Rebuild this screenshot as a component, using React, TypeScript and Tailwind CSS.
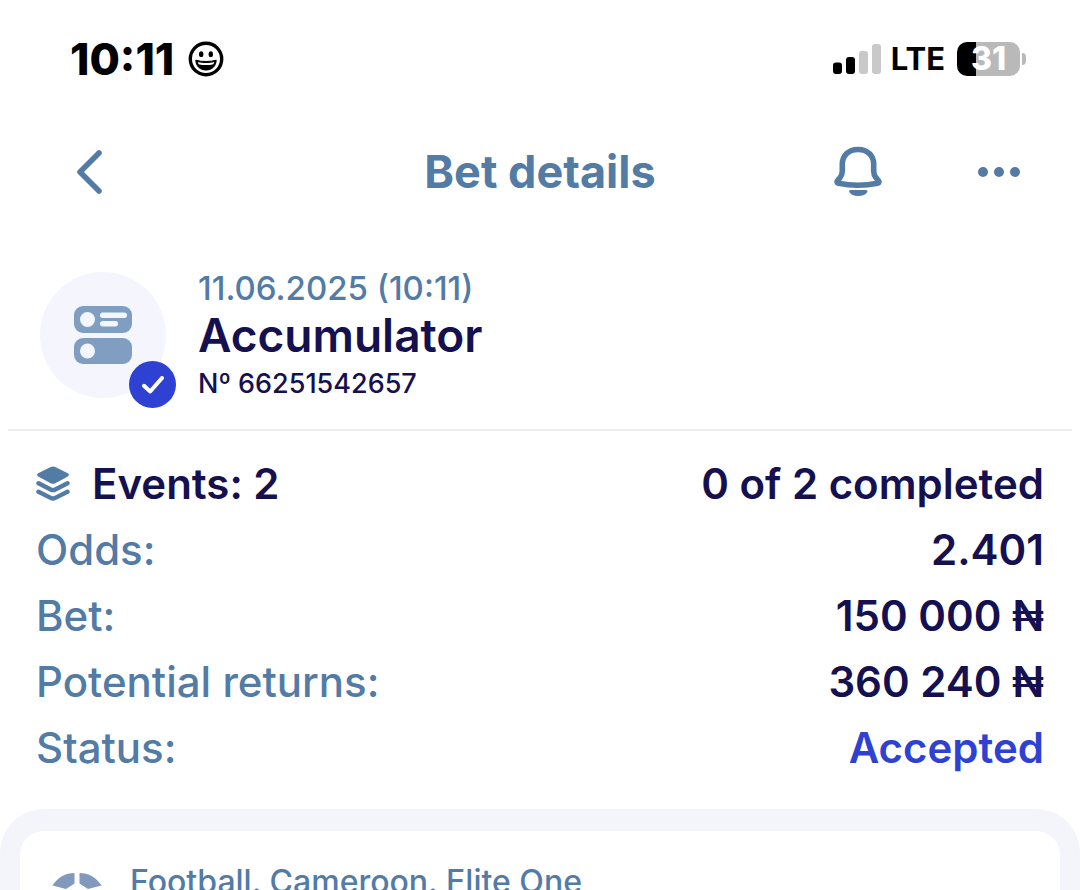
import React from 'react';

type Detail = {
    label: string;
    value: string;
    accent?: boolean;
};

const details: Detail[] = [
    { label: 'Odds:', value: '2.401' },
    { label: 'Bet:', value: '150 000 ₦' },
    { label: 'Potential returns:', value: '360 240 ₦' },
    { label: 'Status:', value: 'Accepted', accent: true },
];

const StatusBar: React.FC = () => (
    <div className="flex items-center justify-between pt-8 pl-[70px] pr-[54px] text-black">
        <div className="flex items-center gap-3.5">
            <span className="text-[44px] leading-[54px] font-extrabold">10:11</span>
            <svg className="size-9" viewBox="0 0 36 36" fill="none" aria-hidden="true">
                <circle cx="18" cy="18" r="15.7" stroke="currentColor" strokeWidth="3.4" />
                <ellipse cx="13.2" cy="13.2" rx="2.2" ry="2.9" fill="currentColor" />
                <ellipse cx="22.8" cy="13.2" rx="2.2" ry="2.9" fill="currentColor" />
                <path
                    d="M7.8 19.2c3 .9 6.400 1.300 10.200 1.300s7.200-.4 10.200-1.300c-.2 6-4.300 9.800-10.200 9.800S8 25.200 7.800 19.200Z"
                    fill="currentColor"
                    stroke="currentColor"
                    strokeLinejoin="round"
                />
                <path d="M9.800 20.900c2.400.7 5.100 1 8.200 1s5.800-.3 8.200-1c-.2.900-.5 1.600-.9 2.300-2.200.6-4.600.9-7.300.9s-5.100-.3-7.300-.9c-.4-.7-.7-1.400-.9-2.300Z" fill="#fff" />
            </svg>
        </div>
        <div className="flex items-center">
            <svg className="h-8 w-12" viewBox="0 0 48 32" aria-hidden="true">
                <rect x="0" y="19.500" width="9" height="11.500" rx="3" fill="#000" />
                <rect x="13" y="14" width="9" height="17" rx="3" fill="#000" />
                <rect x="26" y="8" width="9" height="23" rx="3" fill="#c9c9c9" />
                <rect x="39" y="1" width="9" height="30" rx="3" fill="#c9c9c9" />
            </svg>
            <span className="ml-2.5 text-[31px] leading-[54px] font-bold">LTE</span>
            <div className="ml-3 flex items-center gap-0.5">
                <div className="flex h-[34px] w-[63px] items-center justify-center rounded-[10px] bg-linear-to-r from-black from-30% to-[#b9b9b9] to-30%">
                    <span className="text-[32px] leading-8 font-extrabold text-white">31</span>
                </div>
                <div className="h-3 w-1 rounded-r-full bg-[#b9b9b9]" />
            </div>
        </div>
    </div>
);

const Header: React.FC = () => (
    <header className="grid grid-cols-[1fr_auto_1fr] items-center px-[60px] pt-[50px] text-[#527ba6]">
        <button aria-label="Back" className="flex size-[72px] items-center">
            <svg className="h-11 w-[60px]" viewBox="0 0 60 44" fill="none" aria-hidden="true">
                <path d="M39 3 20 22l19 19" stroke="currentColor" strokeWidth="5.500" strokeLinecap="round" strokeLinejoin="round" />
            </svg>
        </button>
        <h1 className="text-[45px] leading-[72px] font-bold">Bet details</h1>
        <div className="flex items-center justify-end gap-[92px]">
            <button aria-label="Notifications" className="flex h-[72px] w-14 items-center justify-center">
                <svg className="h-[52px] w-12" viewBox="0 0 48 52" fill="none" aria-hidden="true">
                    <path
                        d="M24 3.500C14 3.500 8.300 10 8.300 18.500V25c0 2.600-.8 4.800-2.300 6.700l-2.500 3.100c-.8 1-.4 2.300.9 2.500 13 2.500 26.200 2.500 39.200 0 1.300-.2 1.700-1.500.9-2.500L42 31.700a10.500 10.500 0 0 1-2.300-6.700V18.500C39.700 10 34 3.500 24 3.500Z"
                        stroke="currentColor"
                        strokeWidth="5.600"
                        strokeLinejoin="round"
                    />
                    <path d="M16.500 44h15.500c1.200 0 1.800 1 1.300 2-1.500 2.800-4.500 4-9 4s-7.500-1.200-9-4c-.5-1 .1-2 1.200-2Z" fill="currentColor" />
                </svg>
            </button>
            <button aria-label="More" className="flex h-[72px] items-center gap-1.5">
                <span className="size-2.5 rounded-full bg-current" />
                <span className="size-2.5 rounded-full bg-current" />
                <span className="size-2.5 rounded-full bg-current" />
            </button>
        </div>
    </header>
);

const BetSummary: React.FC = () => (
    <section className="mx-2 flex items-center gap-8 border-b-2 border-[#ececf1] px-8 pt-[58px] pb-[25px]">
        <div className="relative flex size-[126px] items-center justify-center rounded-full bg-[#f5f6fd]">
            <svg className="size-[60px]" viewBox="0 0 60 60" aria-hidden="true">
                <rect x="1" y="1" width="58" height="27" rx="9" fill="#7f9ec1" />
                <rect x="1" y="33" width="58" height="26" rx="9" fill="#7f9ec1" />
                <circle cx="14.500" cy="14.500" r="7.500" fill="#f3f7fd" />
                <circle cx="14.500" cy="46" r="7.500" fill="#f3f7fd" />
                <rect x="27" y="7.500" width="27" height="5.500" rx="2.700" fill="#f3f7fd" />
                <rect x="27" y="16" width="18" height="5.500" rx="2.700" fill="#f3f7fd" />
            </svg>
            <div className="absolute -right-2.5 -bottom-2.5 flex size-[47px] items-center justify-center rounded-full bg-[#2f41d3]">
                <svg className="h-[18px] w-[22px]" viewBox="0 0 22 18" fill="none" aria-hidden="true">
                    <path d="m2 9.800 6.200 5.700L20 2" stroke="#fff" strokeWidth="4" strokeLinecap="round" strokeLinejoin="round" />
                </svg>
            </div>
        </div>
        <div className="pt-1">
            <p className="text-[33px] leading-9 font-medium text-[#527ba6]">11.06.2025 (10:11)</p>
            <h2 className="text-[46px] leading-[58px] font-semibold text-[#15104f]">Accumulator</h2>
            <p className="text-[27px] leading-10 font-medium text-[#15104f]">Nº 66251542657</p>
        </div>
    </section>
);

const App: React.FC = () => {
    return (
        <div className="flex h-screen flex-col overflow-hidden bg-white font-['Inter','Liberation_Sans',sans-serif]">
            <StatusBar />
            <Header />
            <BetSummary />

            <section className="px-9 pt-5 pb-7 text-[42px] leading-[66px]">
                <div className="flex items-center justify-between font-semibold text-[#15104f]">
                    <div className="flex items-center gap-[22px]">
                        <svg className="h-9 w-[34px]" viewBox="0 0 34 36" aria-hidden="true">
                            <path
                                d="M14.700 1a5 5 0 0 1 4.600 0l12.500 6.300c1.500.8 1.500 2.300 0 3.100l-12.500 6.800a5 5 0 0 1-4.600 0L2.200 10.400c-1.500-.8-1.500-2.300 0-3.100Z"
                                fill="#527ba6"
                            />
                            <path
                                d="m2.500 17.300 12.200 6.200a5 5 0 0 0 4.600 0L31.500 17.300M2.500 25.700l12.200 6.200a5 5 0 0 0 4.600 0L31.500 25.700"
                                fill="none"
                                stroke="#527ba6"
                                strokeWidth="4.400"
                                strokeLinecap="round"
                            />
                        </svg>
                        <span>Events: 2</span>
                    </div>
                    <span>0 of 2 completed</span>
                </div>
                <dl>
                    {details.map((item) => (
                        <div key={item.label} className="flex items-center justify-between">
                            <dt className="font-medium text-[#527ba6]">{item.label}</dt>
                            <dd className={item.accent ? 'font-semibold text-[#2f41d3]' : 'font-semibold text-[#15104f]'}>
                                {item.value}
                            </dd>
                        </div>
                    ))}
                </dl>
            </section>

            <section className="flex-1 rounded-t-[44px] bg-[#f4f5fb] px-5 pt-[22px]">
                <div className="flex gap-7 rounded-t-3xl bg-white px-8 pt-7 text-[#527ba6]">
                    <svg className="mt-[14px] size-[50px]" viewBox="0 0 50 50" fill="#8299be" aria-hidden="true">
                        <path d="M22.500 0v10.500L14 16 .5 12.500C5.500 4.500 13.500 0 22.500 0ZM27.500 0v10.500L36 16l13.500-3.500C44.500 4.500 36.500 0 27.500 0Z" />
                        <path d="m25 18 9 6.500-3.500 10.500h-11L16 24.500Z" />
                    </svg>
                    <p className="text-[32px] leading-[46px] font-medium">Football. Cameroon. Elite One</p>
                </div>
            </section>
        </div>
    );
};

export default App;
